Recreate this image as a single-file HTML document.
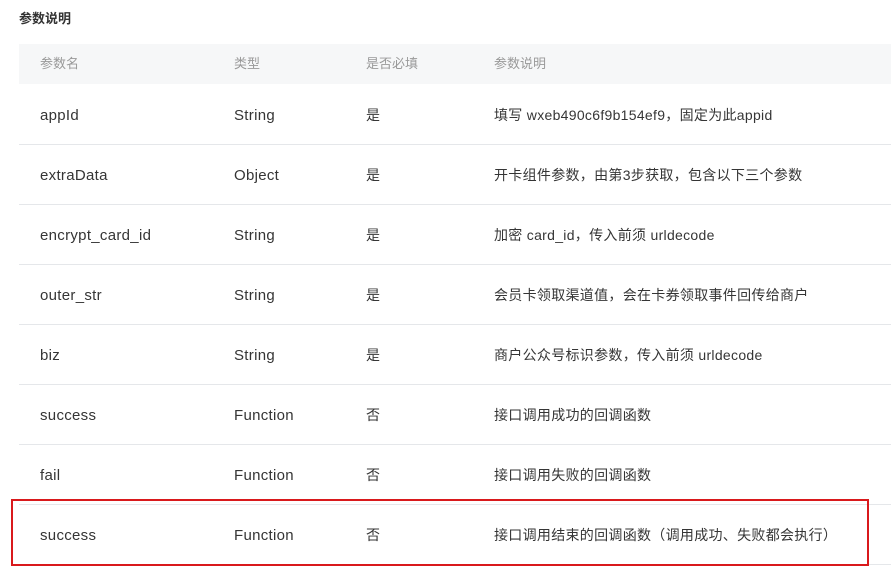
<!DOCTYPE html>
<html><head><meta charset="utf-8"><style>
body{margin:0;width:891px;height:576px;background:#fff;overflow:hidden;position:relative;font-family:"Liberation Sans","Noto Sans CJK SC",sans-serif;color:#353535;font-size:15px}
.t{position:absolute;left:19px;top:8px;font-size:13px;font-weight:bold;color:#333}
.hd{position:absolute;left:19px;top:44px;width:880px;height:40px;line-height:40px;background:#f6f7f8;color:#999;font-size:13px}
.row{position:absolute;left:19px;width:880px;height:60px;line-height:60px;border-bottom:1px solid #e5e7ea}
.c{position:absolute;top:0;white-space:nowrap}
.row .c1,.row .c2{letter-spacing:0.3px;top:2px}
.row .c3,.row .c4{top:1px}
.c1{left:21px}.c2{left:215px}.c3{left:347px;font-size:14px}.c4{left:475px;font-size:14px}
.hd .c3,.hd .c4{font-size:13px}
.row .c4{letter-spacing:0.3px}
.box{position:absolute;left:11px;top:499px;width:854px;height:63px;border:2px solid #d9191c}
</style></head><body>
<div class="t">参数说明</div>
<div class="hd"><span class="c c1">参数名</span><span class="c c2">类型</span><span class="c c3">是否必填</span><span class="c c4">参数说明</span></div>
<div class="row" style="top:84px"><span class="c c1">appId</span><span class="c c2">String</span><span class="c c3">是</span><span class="c c4">填写 wxeb490c6f9b154ef9，固定为此appid</span></div>
<div class="row" style="top:144px"><span class="c c1">extraData</span><span class="c c2">Object</span><span class="c c3">是</span><span class="c c4">开卡组件参数，由第3步获取，包含以下三个参数</span></div>
<div class="row" style="top:204px"><span class="c c1">encrypt_card_id</span><span class="c c2">String</span><span class="c c3">是</span><span class="c c4">加密 card_id，传入前须 urldecode</span></div>
<div class="row" style="top:264px"><span class="c c1">outer_str</span><span class="c c2">String</span><span class="c c3">是</span><span class="c c4">会员卡领取渠道值，会在卡券领取事件回传给商户</span></div>
<div class="row" style="top:324px"><span class="c c1">biz</span><span class="c c2">String</span><span class="c c3">是</span><span class="c c4">商户公众号标识参数，传入前须 urldecode</span></div>
<div class="row" style="top:384px"><span class="c c1">success</span><span class="c c2">Function</span><span class="c c3">否</span><span class="c c4">接口调用成功的回调函数</span></div>
<div class="row" style="top:444px"><span class="c c1">fail</span><span class="c c2">Function</span><span class="c c3">否</span><span class="c c4">接口调用失败的回调函数</span></div>
<div class="row" style="top:504px"><span class="c c1">success</span><span class="c c2">Function</span><span class="c c3">否</span><span class="c c4">接口调用结束的回调函数（调用成功、失败都会执行）</span></div>
<div class="box"></div>
</body></html>
